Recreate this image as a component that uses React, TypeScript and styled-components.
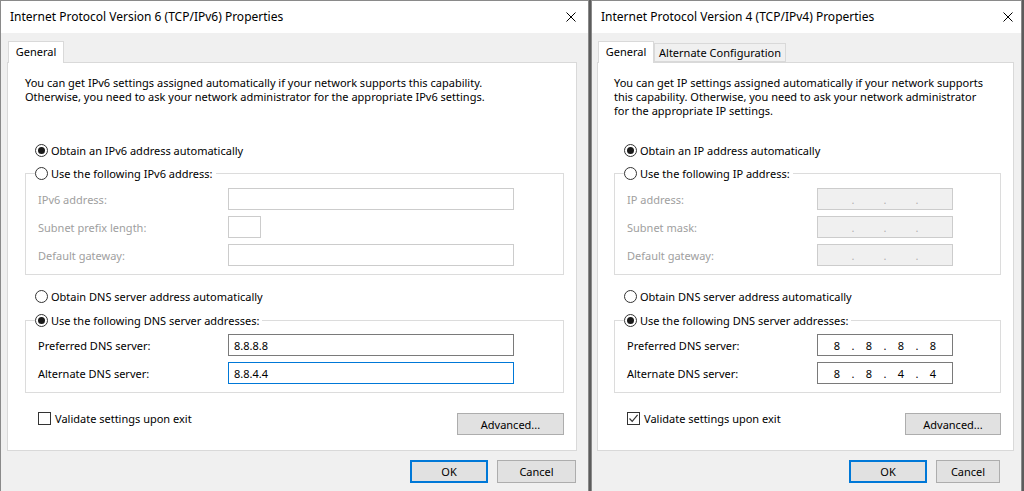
import React from "react";
import styled, { createGlobalStyle } from "styled-components";

const GlobalStyle = createGlobalStyle`
  html, body {
    margin: 0;
    padding: 0;
    background: #5c5c5c;
  }
  body {
    font-family: "Noto Sans", "DejaVu Sans", sans-serif;
    font-size: 11px;
    color: #000;
  }
`;

type AddrField = { label: string; width: number };

type DialogSpec = {
  title: string;
  width: number;
  padLeft: number;
  closeInset: number;
  paneWidth: number;
  paneIndent: number;
  tabs: { label: string; width: number }[];
  intro: string[];
  autoLabel: string;
  manualLabel: string;
  fields: AddrField[];
  dotted: boolean;
  dns: string[][];
  focusAlt: boolean;
  validate: boolean;
  advancedWidth: number;
  cancelWidth: number;
  buttonRowWidth: number;
};

const ipv6: DialogSpec = {
  title: "Internet Protocol Version 6 (TCP/IPv6) Properties",
  width: 589,
  padLeft: 6,
  closeInset: 12,
  paneWidth: 570,
  paneIndent: 17,
  tabs: [{ label: "General", width: 56 }],
  intro: [
    "You can get IPv6 settings assigned automatically if your network supports this capability.",
    "Otherwise, you need to ask your network administrator for the appropriate IPv6 settings.",
  ],
  autoLabel: "Obtain an IPv6 address automatically",
  manualLabel: "Use the following IPv6 address:",
  fields: [
    { label: "IPv6 address:", width: 286 },
    { label: "Subnet prefix length:", width: 33 },
    { label: "Default gateway:", width: 286 },
  ],
  dotted: false,
  dns: [["8.8.8.8"], ["8.8.4.4"]],
  focusAlt: true,
  validate: false,
  advancedWidth: 107,
  cancelWidth: 79,
  buttonRowWidth: 569,
};

const ipv4: DialogSpec = {
  title: "Internet Protocol Version 4 (TCP/IPv4) Properties",
  width: 431,
  padLeft: 5,
  closeInset: 8,
  paneWidth: 417,
  paneIndent: 16,
  tabs: [
    { label: "General", width: 56 },
    { label: "Alternate Configuration", width: 132 },
  ],
  intro: [
    "You can get IP settings assigned automatically if your network supports",
    "this capability. Otherwise, you need to ask your network administrator",
    "for the appropriate IP settings.",
  ],
  autoLabel: "Obtain an IP address automatically",
  manualLabel: "Use the following IP address:",
  fields: [
    { label: "IP address:", width: 136 },
    { label: "Subnet mask:", width: 136 },
    { label: "Default gateway:", width: 136 },
  ],
  dotted: true,
  dns: [
    ["8", "8", "8", "8"],
    ["8", "8", "4", "4"],
  ],
  focusAlt: false,
  validate: true,
  advancedWidth: 96,
  cancelWidth: 64,
  buttonRowWidth: 403,
};

const Screen = styled.div`
  display: flex;
  gap: 2px;
  width: 1024px;
  height: 491px;
  overflow: hidden;
  background: #5c5c5c;
`;

const Window = styled.section<{ $width: number }>`
  flex: none;
  box-sizing: border-box;
  width: ${(p) => p.$width}px;
  height: 491px;
  border: 1px solid #8a8a8a;
  border-bottom: none;
  background: #f0f0f0;
  display: flex;
  flex-direction: column;
`;

const TitleBar = styled.header<{ $inset: number }>`
  height: 32px;
  flex: none;
  background: #fff;
  display: flex;
  align-items: center;
  padding: 0 ${(p) => p.$inset}px 1px 9px;
  box-sizing: border-box;
`;

const Title = styled.h1`
  margin: 0;
  font-size: 12px;
  font-weight: 400;
  white-space: nowrap;
`;

const CloseGlyph = styled.svg`
  margin-left: auto;
  width: 10px;
  height: 10px;
`;

const Body = styled.div<{ $pad: number }>`
  padding: 8px 0 0 ${(p) => p.$pad}px;
  display: flex;
  flex-direction: column;
`;

const TabStrip = styled.div`
  display: flex;
  align-items: flex-end;
  height: 21px;
  padding-left: 1px;
`;

const Tab = styled.div<{ $active?: boolean; $width: number }>`
  box-sizing: border-box;
  width: ${(p) => p.$width}px;
  height: ${(p) => (p.$active ? 22 : 19)}px;
  margin-bottom: ${(p) => (p.$active ? -1 : 0)}px;
  border: 1px solid #d9d9d9;
  border-bottom: ${(p) => (p.$active ? "none" : "1px solid #d9d9d9")};
  background: ${(p) => (p.$active ? "#fff" : "#f0f0f0")};
  position: relative;
  z-index: ${(p) => (p.$active ? 1 : 0)};
  display: flex;
  align-items: center;
  justify-content: center;
  padding-bottom: ${(p) => (p.$active ? 2 : 0)}px;
  white-space: nowrap;
`;

const Pane = styled.div<{ $width: number; $indent: number }>`
  box-sizing: border-box;
  width: ${(p) => p.$width}px;
  height: 389px;
  border: 1px solid #d9d9d9;
  background: #fff;
  padding: 13px 12px 0 ${(p) => p.$indent}px;
  display: flex;
  flex-direction: column;
`;

const Intro = styled.p`
  margin: 0;
  height: 66px;
  line-height: 14px;
  white-space: nowrap;
  span {
    display: block;
  }
`;

const OptionRow = styled.label<{ $gap?: number }>`
  display: flex;
  align-items: center;
  gap: 3px;
  height: 16px;
  margin-top: ${(p) => p.$gap ?? 0}px;
  padding-left: 10px;
  white-space: nowrap;
`;

const RadioDot = styled.span<{ $on?: boolean }>`
  box-sizing: border-box;
  flex: none;
  width: 13px;
  height: 13px;
  border: 1px solid #333;
  border-radius: 50%;
  background: #fff;
  display: flex;
  align-items: center;
  justify-content: center;
  &::after {
    content: "";
    width: 7px;
    height: 7px;
    border-radius: 50%;
    background: ${(p) => (p.$on ? "#1a1a1a" : "transparent")};
  }
`;

const Group = styled.fieldset<{ $gap: number }>`
  margin: ${(p) => p.$gap}px 0 0;
  padding: 0;
  min-width: 0;
  border: 1px solid #dcdcdc;
`;

const Legend = styled.legend`
  margin-left: 9px;
  padding: 0 3px 0 0;
  height: 16px;
  display: flex;
  align-items: center;
  gap: 3px;
  white-space: nowrap;
`;

const FieldGrid = styled.div<{ $top: number }>`
  display: grid;
  grid-template-columns: 190px auto;
  grid-auto-rows: 22px;
  row-gap: 6px;
  align-items: center;
  padding: ${(p) => p.$top}px 12px 8px 12px;
`;

const FieldLabel = styled.span<{ $disabled?: boolean }>`
  color: ${(p) => (p.$disabled ? "#a0a0a0" : "#000")};
  white-space: nowrap;
`;

const TextBox = styled.div<{ $width: number; $state: "disabled" | "normal" | "focus"; $gray?: boolean }>`
  box-sizing: border-box;
  width: ${(p) => p.$width}px;
  height: 22px;
  border: 1px solid
    ${(p) => (p.$state === "focus" ? "#0078d7" : p.$state === "normal" ? "#7a7a7a" : "#cccccc")};
  background: ${(p) => (p.$gray ? "#f0f0f0" : "#fff")};
  display: flex;
  align-items: center;
  padding-left: 5px;
`;

const IpBox = styled(TextBox)`
  padding-left: 6px;
`;

const Octet = styled.span`
  width: 26px;
  text-align: center;
`;

const Dot = styled.span<{ $faint?: boolean }>`
  width: 6px;
  text-align: center;
  color: ${(p) => (p.$faint ? "#b0b0b0" : "#000")};
`;

const Footer = styled.div`
  display: flex;
  justify-content: space-between;
  align-items: flex-start;
`;

const CheckRow = styled.label`
  display: flex;
  align-items: center;
  gap: 4px;
  height: 16px;
  margin: 17px 0 0 13px;
  white-space: nowrap;
`;

const CheckBox = styled.span`
  box-sizing: border-box;
  flex: none;
  width: 13px;
  height: 13px;
  border: 1px solid #333;
  background: #fff;
  display: flex;
  align-items: center;
  justify-content: center;
`;

const Button = styled.button<{ $width: number; $primary?: boolean }>`
  box-sizing: border-box;
  width: ${(p) => p.$width}px;
  height: 23px;
  padding: 0;
  margin: 0;
  font: inherit;
  color: #000;
  background: #e1e1e1;
  border: ${(p) => (p.$primary ? "2px solid #0078d7" : "1px solid #adadad")};
`;

const AdvancedButton = styled(Button)`
  margin-top: 20px;
  height: 22px;
`;

const ButtonRow = styled.div<{ $width: number }>`
  width: ${(p) => p.$width}px;
  display: flex;
  justify-content: flex-end;
  gap: 9px;
  margin-top: 9px;
`;

function IpField({ parts, width, state }: { parts?: string[]; width: number; state: "disabled" | "normal" }) {
  const vals = parts ?? ["", "", "", ""];
  return (
    <IpBox $width={width} $state={state} $gray={state === "disabled"}>
      {vals.map((v, i) => (
        <React.Fragment key={i}>
          <Octet>{v}</Octet>
          {i < 3 && <Dot $faint={state === "disabled"}>.</Dot>}
        </React.Fragment>
      ))}
    </IpBox>
  );
}

function Dialog({ spec }: { spec: DialogSpec }) {
  const dnsWidth = spec.fields[0].width;
  return (
    <Window $width={spec.width}>
      <TitleBar $inset={spec.closeInset}>
        <Title>{spec.title}</Title>
        <CloseGlyph viewBox="0 0 10 10">
          <path d="M0.5 0.5 L9.5 9.5 M9.5 0.5 L0.5 9.5" stroke="#000" strokeWidth="1" />
        </CloseGlyph>
      </TitleBar>
      <Body $pad={spec.padLeft}>
        <TabStrip>
          {spec.tabs.map((t, i) => (
            <Tab key={t.label} $active={i === 0} $width={t.width}>
              {t.label}
            </Tab>
          ))}
        </TabStrip>
        <Pane $width={spec.paneWidth} $indent={spec.paneIndent}>
          <Intro>
            {spec.intro.map((l) => (
              <span key={l}>{l}</span>
            ))}
          </Intro>
          <OptionRow>
            <RadioDot $on />
            {spec.autoLabel}
          </OptionRow>
          <Group $gap={7}>
            <Legend>
              <RadioDot />
              {spec.manualLabel}
            </Legend>
            <FieldGrid $top={7}>
              {spec.fields.map((f) => (
                <React.Fragment key={f.label}>
                  <FieldLabel $disabled>{f.label}</FieldLabel>
                  {spec.dotted ? (
                    <IpField width={f.width} state="disabled" />
                  ) : (
                    <TextBox $width={f.width} $state="disabled" />
                  )}
                </React.Fragment>
              ))}
            </FieldGrid>
          </Group>
          <OptionRow $gap={13}>
            <RadioDot />
            Obtain DNS server address automatically
          </OptionRow>
          <Group $gap={8}>
            <Legend>
              <RadioDot $on />
              Use the following DNS server addresses:
            </Legend>
            <FieldGrid $top={6}>
              {["Preferred DNS server:", "Alternate DNS server:"].map((label, i) => (
                <React.Fragment key={label}>
                  <FieldLabel>{label}</FieldLabel>
                  {spec.dotted ? (
                    <IpField width={dnsWidth} parts={spec.dns[i]} state="normal" />
                  ) : (
                    <TextBox $width={dnsWidth} $state={spec.focusAlt && i === 1 ? "focus" : "normal"}>
                      {spec.dns[i][0]}
                    </TextBox>
                  )}
                </React.Fragment>
              ))}
            </FieldGrid>
          </Group>
          <Footer>
            <CheckRow>
              <CheckBox>
                {spec.validate && (
                  <svg width="11" height="11" viewBox="0 0 11 11">
                    <path d="M1.5 5.5 L4.2 8.4 L9.6 1.8" fill="none" stroke="#333" strokeWidth="1.2" />
                  </svg>
                )}
              </CheckBox>
              Validate settings upon exit
            </CheckRow>
            <AdvancedButton $width={spec.advancedWidth}>Advanced...</AdvancedButton>
          </Footer>
        </Pane>
        <ButtonRow $width={spec.buttonRowWidth}>
          <Button $width={78} $primary>
            OK
          </Button>
          <Button $width={spec.cancelWidth}>Cancel</Button>
        </ButtonRow>
      </Body>
    </Window>
  );
}

export default function App() {
  return (
    <>
      <GlobalStyle />
      <Screen>
        <Dialog spec={ipv6} />
        <Dialog spec={ipv4} />
      </Screen>
    </>
  );
}
